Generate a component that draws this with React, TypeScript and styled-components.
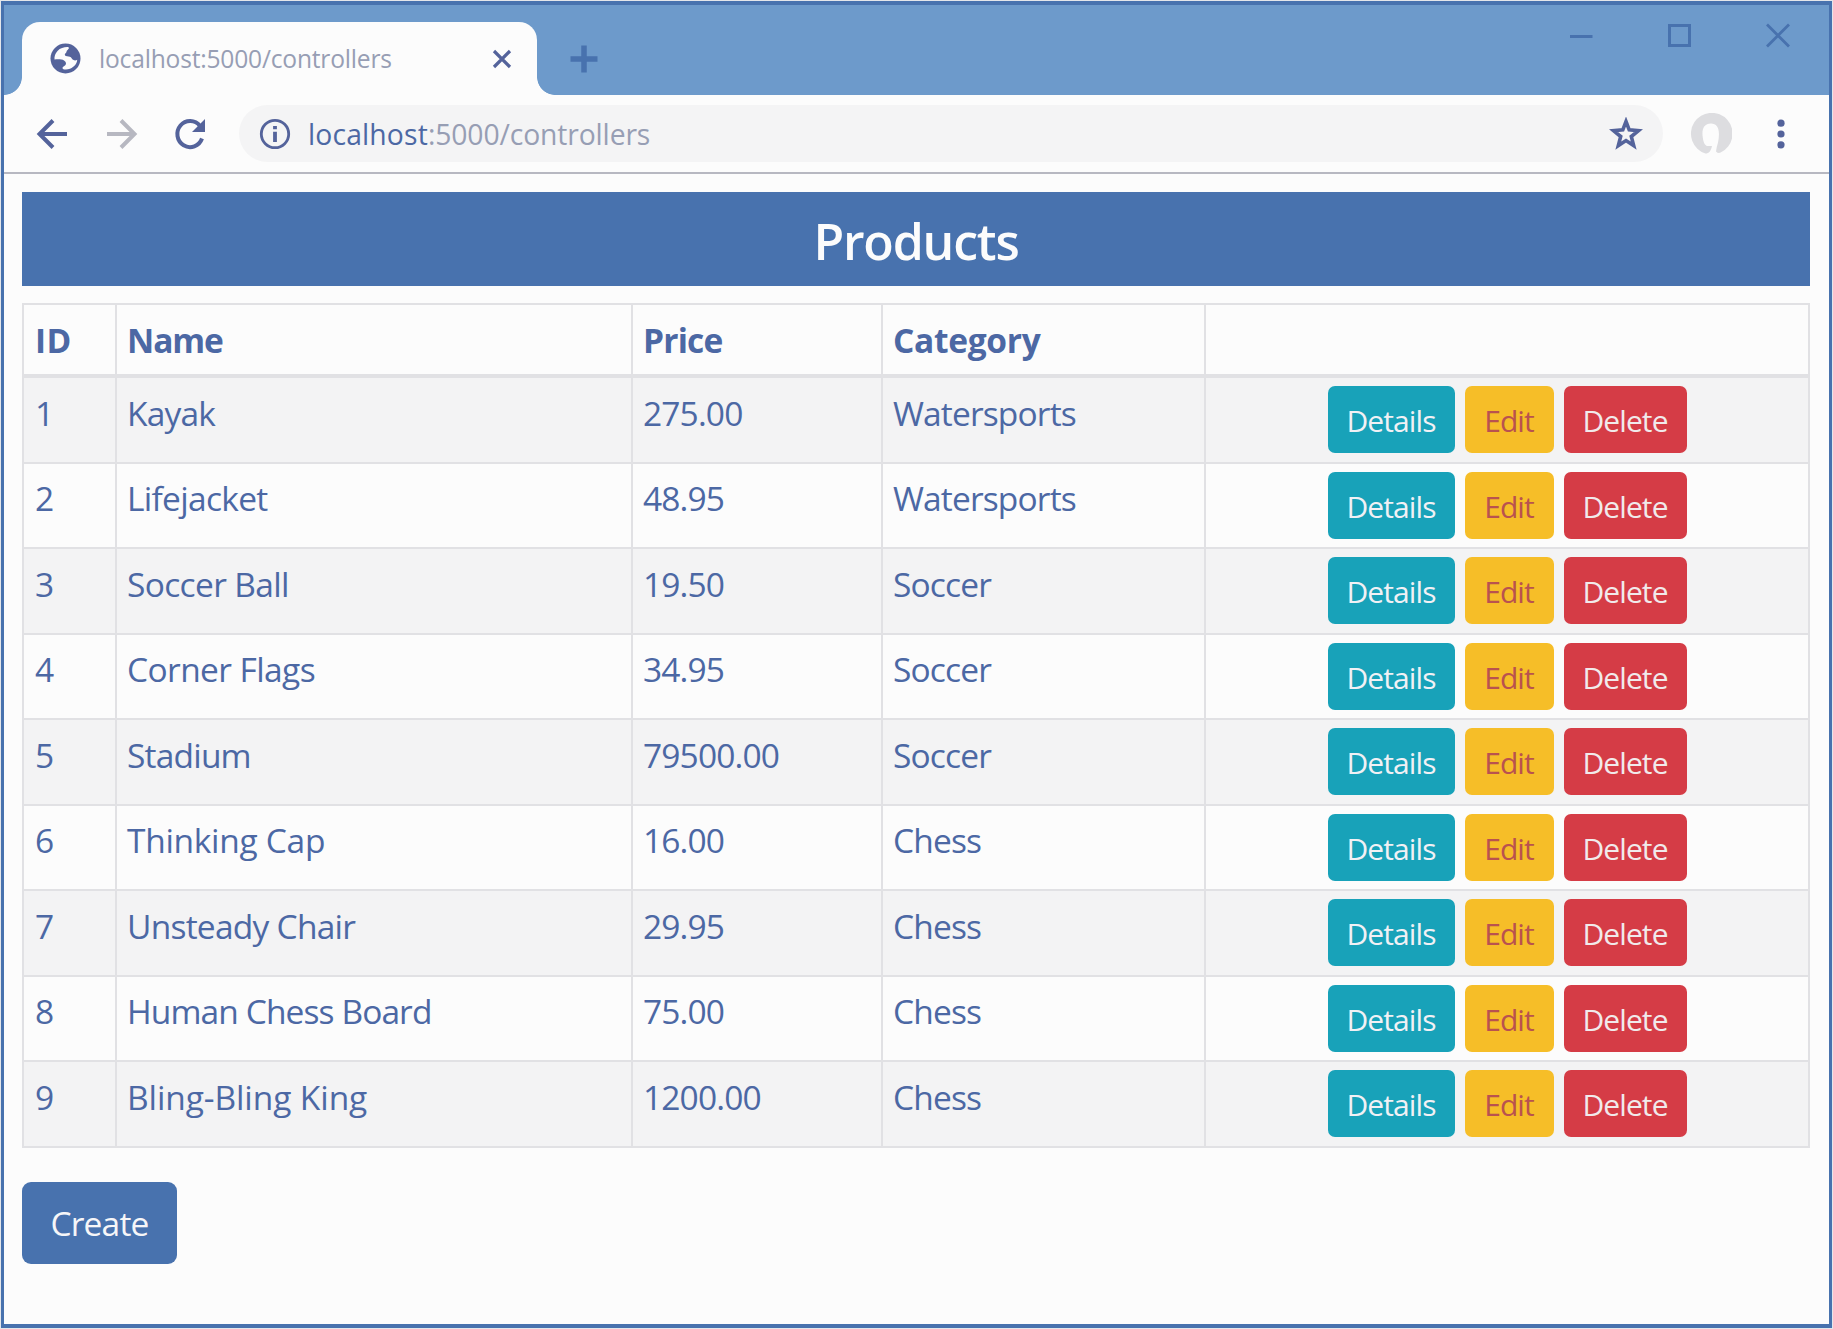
import React from "react";
import styled, { createGlobalStyle } from "styled-components";

const color = {
  blue: "#4872ae",
  sky: "#6d9acb",
  page: "#fcfcfc",
  ink: "#4c68a4",
  icon: "#54639b",
  muted: "#979eb4",
  line: "#e1e1e4",
  stripe: "#f3f3f4",
};

const GlobalStyle = createGlobalStyle`
  * { box-sizing: border-box; }
  body {
    margin: 0;
    background: ${color.page};
    font-family: "Open Sans", "Noto Sans", sans-serif;
    color: ${color.ink};
  }
`;

const Desktop = styled.div`
  height: 1329px;
  padding: 1px 1px 1px 1px;
  background: #e4e6ea;
`;

const Window = styled.div`
  height: 1327px;
  display: flex;
  flex-direction: column;
  border: 4px solid ${color.blue};
  border-left-width: 3px;
  border-right-width: 3px;
  background: ${color.page};
`;

const TitleBar = styled.header`
  display: flex;
  align-items: flex-end;
  height: 90px;
  flex: none;
  background: ${color.sky};
`;

const Foot = styled.div<{ $side: "left" | "right" }>`
  width: 18px;
  height: 18px;
  background: radial-gradient(
    circle at ${(p) => (p.$side === "left" ? "0 0" : "100% 0")},
    ${color.sky} 17.5px,
    ${color.page} 18.2px
  );
`;

const Tab = styled.div`
  display: flex;
  align-items: center;
  width: 515px;
  height: 73px;
  padding: 0 25px 0 28px;
  border-radius: 18px 18px 0 0;
  background: ${color.page};
`;

const TabTitle = styled.span`
  flex: 1;
  margin-left: 18px;
  font-size: 24.6px;
  letter-spacing: -0.2px;
  line-height: 34px;
  color: ${color.muted};
`;

const NewTab = styled.div`
  display: flex;
  align-self: center;
  margin: 18px 0 0 15px;
`;

const WindowControls = styled.div`
  display: flex;
  gap: 74px;
  align-self: flex-start;
  margin: 18px 39px 0 auto;
`;

const Toolbar = styled.nav`
  display: flex;
  align-items: center;
  flex: none;
  height: 79px;
  padding: 0 0 0 32px;
  border-bottom: 2px solid #b7b8c1;
`;

const NavButtons = styled.div`
  display: flex;
  align-items: center;
  gap: 36px;
`;

const AddressBar = styled.div`
  display: flex;
  align-items: center;
  width: 1424px;
  height: 57px;
  margin-left: 32px;
  padding: 0 20px;
  border-radius: 29px;
  background: #f4f4f5;
`;

const Url = styled.span`
  flex: 1;
  padding-top: 1px;
  margin-left: 17px;
  font-size: 28.3px;
  line-height: 40px;
  letter-spacing: -0.12px;
  color: ${color.muted};
`;

const Host = styled.span`
  color: ${color.ink};
  letter-spacing: 0.15px;
`;

const ToolbarEnd = styled.div`
  display: flex;
  align-items: center;
  gap: 45px;
  margin-left: 27px;
`;

const Page = styled.main`
  padding: 18px 19px 0 18px;
`;

const Banner = styled.h1`
  margin: 0 0 17px;
  height: 94px;
  padding-top: 3px;
  line-height: 92px;
  text-align: center;
  font-size: 50px;
  font-weight: 600;
  letter-spacing: -1.2px;
  color: #fcfcfc;
  background: ${color.blue};
`;

const Table = styled.div`
  border: 2px solid ${color.line};
  border-width: 2px 2px 0 2px;
  width: 1788px;
`;

const Row = styled.div<{ $striped?: boolean; $head?: boolean }>`
  display: grid;
  grid-template-columns: 91px 516px 250px 323px 1fr;
  height: ${(p) => (p.$head ? "73px" : "85.55px")};
  border-bottom: ${(p) => (p.$head ? 4 : 2)}px solid ${color.line};
  background: ${(p) => (p.$striped ? color.stripe : "transparent")};
  font-weight: ${(p) => (p.$head ? 700 : 400)};
`;

const Cell = styled.div<{ $tracking?: number }>`
  padding: 9.5px 0 0 10px;
  font-size: 33.5px;
  line-height: 50px;
  letter-spacing: ${(p) => p.$tracking ?? -0.85}px;

  & + & {
    border-left: 2px solid ${color.line};
  }
`;

const IdCell = styled(Cell)`
  padding-left: 11px;
`;

const Actions = styled(Cell)`
  display: flex;
  align-items: flex-start;
  justify-content: center;
  gap: 10px;
  padding: 8px 0 0;
`;

const tones = {
  info: { bg: "#18a2b9", fg: "#f1f1f5", width: 127 },
  warning: { bg: "#f6be28", fg: "#b9524f", width: 89 },
  danger: { bg: "#d53c46", fg: "#f1eaeb", width: 123 },
};

const SmallButton = styled.button<{ $tone: keyof typeof tones }>`
  width: ${(p) => tones[p.$tone].width}px;
  height: 67px;
  padding: 2px 0 0;
  border: 0;
  border-radius: 7px;
  font: 400 30px/63px "Open Sans", "Noto Sans", sans-serif;
  letter-spacing: -0.9px;
  color: ${(p) => tones[p.$tone].fg};
  background: ${(p) => tones[p.$tone].bg};
`;

const CreateButton = styled.button`
  display: block;
  width: 155px;
  height: 82px;
  margin-top: 34px;
  padding: 0;
  border: 0;
  border-radius: 9px;
  font: 400 33.5px/80px "Open Sans", "Noto Sans", sans-serif;
  letter-spacing: -0.8px;
  color: #f6f6f8;
  background: ${color.blue};
`;

interface Product {
  name: string;
  tracking: number;
  price: string;
  category: string;
}

const products: Product[] = [
  { name: "Kayak", tracking: -0.8, price: "275.00", category: "Watersports" },
  { name: "Lifejacket", tracking: -0.7, price: "48.95", category: "Watersports" },
  { name: "Soccer Ball", tracking: -0.65, price: "19.50", category: "Soccer" },
  { name: "Corner Flags", tracking: -0.6, price: "34.95", category: "Soccer" },
  { name: "Stadium", tracking: -0.8, price: "79500.00", category: "Soccer" },
  { name: "Thinking Cap", tracking: -0.3, price: "16.00", category: "Chess" },
  { name: "Unsteady Chair", tracking: -0.75, price: "29.95", category: "Chess" },
  { name: "Human Chess Board", tracking: -0.9, price: "75.00", category: "Chess" },
  { name: "Bling-Bling King", tracking: -0.1, price: "1200.00", category: "Chess" },
];

const GlobeIcon = () => (
  <svg width="31" height="31" viewBox="0 0 31 31">
    <circle cx="15.5" cy="15.5" r="15" fill={color.icon} />
    <path
      d="M17.200 4C14 4 10 5 7.500 8C5.200 10.500 4.200 13.500 4.500 16.500C8 16.200 12 16.200 14 17.500C16 18.800 16.500 20.500 15.500 22C14.500 23.200 12.500 23.500 12.500 25C12.500 26.800 17 27 20 25.800C24.500 24 27 20.500 27.200 16.800C25.500 17.800 23.500 17.500 22.300 16.300C21.500 14.500 20.500 13.500 18.500 13.400C16.500 13.300 14.800 13 14.800 11.500C14.800 10.200 16.500 10.200 16.500 8.800C16.500 7.500 18.500 6.500 19 5C18.800 4.300 18 4 17.200 4Z"
      fill={color.page}
    />
  </svg>
);

const CloseTabIcon = () => (
  <svg width="20" height="20" viewBox="0 0 20 20">
    <path d="M2 2L18 18M18 2L2 18" stroke={color.icon} strokeWidth="3.200" />
  </svg>
);

const PlusIcon = () => (
  <svg width="28" height="28" viewBox="0 0 28 28">
    <path d="M14 .5V27.500M.5 14H27.500" stroke={color.blue} strokeWidth="5.500" />
  </svg>
);

const MinimizeIcon = () => (
  <svg width="26" height="26" viewBox="0 0 26 26">
    <path d="M2 13.500H24.500" stroke={color.blue} strokeWidth="3" />
  </svg>
);

const MaximizeIcon = () => (
  <svg width="24" height="26" viewBox="0 0 24 26">
    <rect x="1.500" y="2.500" width="20" height="20" fill="none" stroke={color.blue} strokeWidth="3" />
  </svg>
);

const CloseIcon = () => (
  <svg width="24" height="26" viewBox="0 0 24 26">
    <path d="M1 1.500L23 23.500M23 1.500L1 23.500" stroke={color.blue} strokeWidth="2.800" />
  </svg>
);

const ArrowIcon = ({ forward = false }: { forward?: boolean }) => (
  <svg width="33" height="32" viewBox="0 0 33 32">
    <path
      d={forward ? "M2 16H29M16 2.500L29.500 16L16 29.500" : "M31 16H4M17 2.500L3.500 16L17 29.500"}
      fill="none"
      stroke={forward ? "#b7b8c1" : color.icon}
      strokeWidth="4"
    />
  </svg>
);

const ReloadIcon = () => (
  <svg width="33" height="34" viewBox="0 0 33 34">
    <path d="M28 21.500A12.700 13 0 1 1 26 9" fill="none" stroke={color.icon} strokeWidth="4" />
    <path d="M31 2V15H18Z" fill={color.icon} />
  </svg>
);

const InfoIcon = () => (
  <svg width="32" height="32" viewBox="0 0 32 32">
    <circle cx="16" cy="16" r="13.700" fill="none" stroke={color.icon} strokeWidth="2.800" />
    <path d="M16 8V11.300M16 13.800V24" stroke={color.icon} strokeWidth="3.800" />
  </svg>
);

const StarIcon = () => (
  <svg width="34" height="34" viewBox="0 0 34 34">
    <path
      d="M17 4.500L20.200 12.900L29.500 13.600L22.300 19.500L24.700 28.600L17 23.600L9.300 28.600L11.700 19.500L4.500 13.600L13.800 12.900Z"
      fill="none"
      stroke={color.icon}
      strokeWidth="3.600"
    />
  </svg>
);

const AvatarIcon = () => (
  <svg width="42" height="42" viewBox="0 0 42 42">
    <path
      d="M15.500 40.500A20.800 20.800 0 1 1 31 39.300Q28.500 41.200 26 38.500Q26.500 34 28 29.500C30.500 17 28 10.500 21 10.500C13.500 10.500 11.500 17 12.800 24.500C13.500 29 14.500 32.500 17.500 33H22C21 38 19 40.500 15.500 40.500Z"
      fill="#dddde0"
    />
  </svg>
);

const MenuIcon = () => (
  <svg width="8" height="30" viewBox="0 0 8 30">
    {[4.2, 15, 25.8].map((y) => (
      <circle key={y} cx="4" cy={y} r="3.600" fill={color.icon} />
    ))}
  </svg>
);

export default function App() {
  return (
    <>
      <GlobalStyle />
      <Desktop>
        <Window>
          <TitleBar>
            <Foot $side="left" />
            <Tab>
              <GlobeIcon />
              <TabTitle>localhost:5000/controllers</TabTitle>
              <CloseTabIcon />
            </Tab>
            <Foot $side="right" />
            <NewTab>
              <PlusIcon />
            </NewTab>
            <WindowControls>
              <MinimizeIcon />
              <MaximizeIcon />
              <CloseIcon />
            </WindowControls>
          </TitleBar>
          <Toolbar>
            <NavButtons>
              <ArrowIcon />
              <ArrowIcon forward />
              <ReloadIcon />
            </NavButtons>
            <AddressBar>
              <InfoIcon />
              <Url>
                <Host>localhost</Host>:5000/controllers
              </Url>
              <StarIcon />
            </AddressBar>
            <ToolbarEnd>
              <AvatarIcon />
              <MenuIcon />
            </ToolbarEnd>
          </Toolbar>
          <Page>
            <Banner>Products</Banner>
            <Table>
              <Row $head>
                <IdCell $tracking={0.3}>ID</IdCell>
                <Cell $tracking={-1.1}>Name</Cell>
                <Cell $tracking={-0.8}>Price</Cell>
                <Cell $tracking={-0.3}>Category</Cell>
                <Cell />
              </Row>
              {products.map((product, i) => (
                <Row key={product.name} $striped={i % 2 === 0}>
                  <IdCell>{i + 1}</IdCell>
                  <Cell $tracking={product.tracking}>{product.name}</Cell>
                  <Cell>{product.price}</Cell>
                  <Cell>{product.category}</Cell>
                  <Actions>
                    <SmallButton $tone="info">Details</SmallButton>
                    <SmallButton $tone="warning">Edit</SmallButton>
                    <SmallButton $tone="danger">Delete</SmallButton>
                  </Actions>
                </Row>
              ))}
            </Table>
            <CreateButton>Create</CreateButton>
          </Page>
        </Window>
      </Desktop>
    </>
  );
}
